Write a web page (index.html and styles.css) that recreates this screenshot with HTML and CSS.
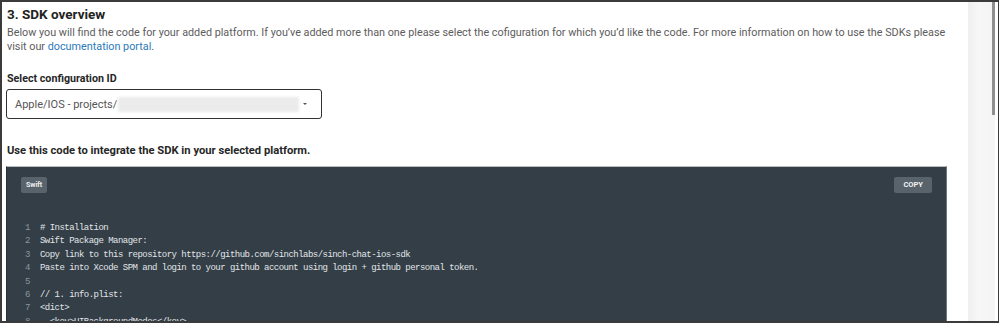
FILE: index.html
```html
<!DOCTYPE html>
<html>
<head>
<meta charset="utf-8">
<link rel="stylesheet" href="styles.css">
</head>
<body>
<div class="frame">
  <main class="content">
    <h2 class="title">3. SDK overview</h2>
    <p class="intro">Below you will find the code for your added platform. If you’ve added more than one please select the cofiguration for which you’d like the code. For more information on how to use the SDKs please visit our <a href="#" class="link">documentation portal</a>.</p>
    <label class="label">Select configuration ID</label>
    <div class="select">
      <span class="select-text">Apple/IOS - projects/</span>
      <span class="blur"></span>
      <span class="caret"></span>
    </div>
    <h3 class="sub">Use this code to integrate the SDK in your selected platform.</h3>
    <div class="code">
      <div class="code-head">
        <span class="chip">Swift</span>
        <span class="chip copy">COPY</span>
      </div>
      <ol class="lines">
        <li><span class="n">1</span><span class="t"># Installation</span></li>
        <li><span class="n">2</span><span class="t">Swift Package Manager:</span></li>
        <li><span class="n">3</span><span class="t">Copy link to this repository https://github.com/sinchlabs/sinch-chat-ios-sdk</span></li>
        <li><span class="n">4</span><span class="t">Paste into Xcode SPM and login to your github account using login + github personal token.</span></li>
        <li><span class="n">5</span><span class="t"></span></li>
        <li><span class="n">6</span><span class="t">// 1. info.plist:</span></li>
        <li><span class="n">7</span><span class="t">&lt;dict&gt;</span></li>
        <li><span class="n">8</span><span class="t">  &lt;key&gt;UIBackgroundModes&lt;/key&gt;</span></li>
      </ol>
    </div>
  </main>
  <div class="track"><div class="thumb"></div></div>
</div>
</body>
</html>
```

FILE: styles.css
```css
html, body {
  margin: 0;
  padding: 0;
  background: #ffffff;
}
.frame {
  box-sizing: border-box;
  width: 999px;
  height: 323px;
  border: 2px solid #3b3b3b;
  border-right-width: 1px;
  display: flex;
  overflow: hidden;
  font-family: Roboto, "Liberation Sans", sans-serif;
}
.content {
  width: 966px;
  flex: none;
  padding: 0 18px 0 2px;
  box-sizing: border-box;
}
.title {
  margin: 0;
  padding: 4px 0 0 3px;
  font-size: 13.5px;
  line-height: 16px;
  font-weight: 700;
  color: #222;
}
.intro {
  margin: 4px 0 0;
  padding-left: 3px;
  font-size: 10.8px;
  line-height: 14px;
  color: #5c5c5c;
}
.link {
  color: #2b7ab9;
  text-decoration: none;
}
.label {
  display: block;
  margin-top: 19px;
  padding-left: 3px;
  font-size: 10.7px;
  line-height: 12px;
  font-weight: 700;
  color: #262626;
}
.select {
  margin-top: 4px;
  margin-left: 2px;
  width: 316px;
  height: 30px;
  box-sizing: border-box;
  border: 1.5px solid #333;
  border-radius: 3px;
  display: flex;
  align-items: center;
  padding-left: 8px;
}
.select-text {
  font-size: 11px;
  color: #555;
}
.blur {
  display: inline-block;
  width: 181px;
  height: 15px;
  margin-left: 1px;
  background: #ebebeb;
  filter: blur(1.5px);
}
.caret {
  width: 0;
  height: 0;
  border-left: 2px solid transparent;
  border-right: 2px solid transparent;
  border-top: 2px solid #555;
  margin-left: 4px;
}
.sub {
  margin: 26px 0 0;
  padding-left: 3px;
  font-size: 11.2px;
  line-height: 12px;
  font-weight: 700;
  color: #262626;
}
.code {
  margin-top: 9px;
  margin-left: 2px;
  margin-right: 3px;
  background: #333e47;
  border-top: 1px solid #b9bdc0;
  border-right: 1px solid #6b7680;
  border-left: 1px solid #27313a;
  height: 200px;
  box-sizing: border-box;
}
.code-head {
  display: flex;
  justify-content: space-between;
  padding: 10px 14px 0 14px;
}
.chip {
  background: #58636b;
  color: #f2f2f2;
  font-size: 7px;
  font-weight: 700;
  line-height: 16px;
  padding: 0 5px;
  border-radius: 2px;
}
.copy {
  padding: 0 9px;
  font-size: 7.5px;
  line-height: 16px;
}
.lines {
  list-style: none;
  margin: 29px 0 0;
  padding: 0 0 0 18px;
  font-family: "Liberation Mono", "DejaVu Sans Mono", monospace;
  font-size: 9px;
  letter-spacing: -0.53px;
  line-height: 13.4px;
}
.lines li {
  display: flex;
  white-space: pre;
}
.n {
  width: 15px;
  flex: none;
  color: #8c959c;
}
.t {
  color: #e2e5e8;
}
.track {
  width: 27px;
  flex: none;
  background: linear-gradient(90deg, #efefef 0%, #f7f7f7 40%, #f4f4f4 100%);
  position: relative;
}
.thumb {
  position: absolute;
  right: 0;
  top: 0;
  width: 3px;
  height: 113px;
  background: #8f8f8f;
}
```
